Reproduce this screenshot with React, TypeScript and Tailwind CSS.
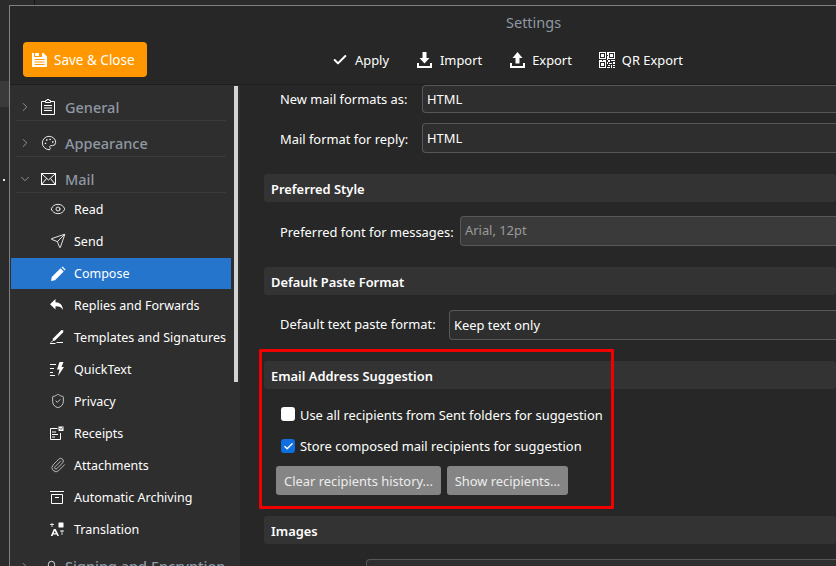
import React from 'react';
import { Check, ChevronDown, ChevronRight, Eye, Lock, Palette, Paperclip, Send, ShieldCheck } from 'lucide-react';

const SaveIcon = () => (
  <svg width="15" height="15" viewBox="0 0 15 15" fill="#fff">
    <path fillRule="evenodd" d="M0 1h2v4h8V1h1.500L15 4.500V15H0zM3 1h4v3H3zM2.500 7v1h10V7zm0 2.500v1h10v-1zm0 2.500v1h10v-1z" />
  </svg>
);

const ClipboardIcon = () => (
  <svg width="14" height="16" viewBox="0 0 14 16" fill="none" stroke="#fff">
    <path d="M4 2.500H.5v13h13v-13H10" />
    <path d="M4.500 3.500v-2h1.500V.5h2v1h1.500v2z" />
    <path d="M3 6.500h8M3 9h8M3 11.500h8" />
  </svg>
);

const EnvelopeIcon = () => (
  <svg width="15" height="12" viewBox="0 0 15 12" fill="none" stroke="#fff">
    <rect x=".5" y=".5" width="14" height="11" />
    <path d="M1 1l6.500 6L14 1M1 11l4.500-5.500M14 11L9.500 5.500" />
  </svg>
);

const PencilIcon = () => (
  <svg width="16" height="16" viewBox="0 0 16 16" fill="#fff">
    <path d="M1 15l.8-4L10.500 2.300l3.200 3.200L5 14.200zM11.500 1.300l1-.8 3 3-.8 1z" />
  </svg>
);

const ReplyIcon = () => (
  <svg width="14" height="14" viewBox="0 0 14 14" fill="#fff">
    <path d="M5.500 1v3.200C10 4.300 12.500 6.800 13 12c-1.500-2.800-4-3.800-7.500-3.700V11.500L0 6.200z" />
  </svg>
);

const SignIcon = () => (
  <svg width="14" height="16" viewBox="0 0 14 16" fill="none" stroke="#fff">
    <path d="M3 9.500L11.500 1 13.500 1.500 13 3.500 5 11.500 2.500 12z" fill="#fff" stroke="none" />
    <path d="M0 14.500h5.500M6.500 13.500h6.500" strokeWidth="1" />
    <path d="M1 13.500l1.500-1.500" strokeWidth="1" />
  </svg>
);

const QuickTextIcon = () => (
  <svg width="14" height="14" viewBox="0 0 14 14" fill="none">
    <path d="M0 2.500h6M0 6.500h4M0 10.500h3M0 13.500h5" stroke="#fff" />
    <path d="M9.500 0h4l-2 5H14l-6 9 1.500-6.500H7z" fill="#fff" />
  </svg>
);

const ReceiptIcon = () => (
  <svg width="14" height="14" viewBox="0 0 14 14" fill="none" stroke="#fff">
    <path d="M7.500 2.500H.5v11h10V7" />
    <path d="M2 6h4M2 8.500h6M2 11h3" />
    <rect x="8.500" y=".5" width="5" height="4.500" fill="#fff" stroke="none" />
    <path d="M9.500 2l1.300 1.500L13 1.500" stroke="#2e2e2e" strokeWidth="0.800" />
  </svg>
);

const ArchiveIcon = () => (
  <svg width="14" height="14" viewBox="0 0 14 14" fill="none" stroke="#fff">
    <path d="M0 1.500h14M1.500 4.500h11v9h-11zM5 7.500h4" />
  </svg>
);

const TranslateIcon = () => (
  <svg width="14" height="14" viewBox="0 0 14 14" fill="#fff">
    <path d="M3.800 7h1.900L9 14H7.400l-.6-1.600H3.200L2.600 14H.8zM4.700 8.800l-1 2.400h2.100z" />
    <rect x="8.500" y="0.500" width="5" height="5" rx="0.500" />
    <path d="M0 2.500h4M2 1v4M10 9h4M12 8v5" stroke="#fff" strokeWidth="0.800" />
  </svg>
);

const TrayArrow = ({ up }: { up?: boolean }) => (
  <svg width="15" height="16" viewBox="0 0 15 16" fill="#fff">
    {up ? <path d="M7.500 0L12.500 6H9.500V11.500H5.500V6H2.500z" /> : <path d="M5.500 0H9.500V6H12.500L7.500 11.500 2.500 6H5.500z" />}
    <path d="M0 11h2v3h11v-3h2v5H0z" />
  </svg>
);

const QrIcon = () => (
  <svg width="16" height="16" viewBox="0 0 16 16" fill="#fff">
    <path fillRule="evenodd" d="M0 0h7v7H0zm1 1v5h5V1zM9 0h7v7H9zm1 1v5h5V1zM0 9h7v7H0zm1 1v5h5v-5z" />
    <path d="M2 2h3v3H2zM11 2h3v3h-3zM2 11h3v3H2zM8 0h1v3H8zM8 4h1v4H8zM0 8h3v1H0zM4 8h3v1H4zM9 8h2v2H9zM12 8h4v1h-4zM8 10h1v2H8zM10 11h3v1h-3zM14 10h2v2h-2zM9 13h2v1H9zM12 13h1v3h-1zM14 13h2v1h-2zM8 15h3v1H8zM14 15h2v1h-2z" />
  </svg>
);

const stroke = { size: 15, color: '#ffffff', strokeWidth: 1.300 };

const subItems = [
  { label: 'Read', icon: <Eye {...stroke} size={16} /> },
  { label: 'Send', icon: <Send {...stroke} size={16} /> },
  { label: 'Compose', icon: <PencilIcon />, active: true },
  { label: 'Replies and Forwards', icon: <ReplyIcon /> },
  { label: 'Templates and Signatures', icon: <SignIcon /> },
  { label: 'QuickText', icon: <QuickTextIcon /> },
  { label: 'Privacy', icon: <ShieldCheck {...stroke} size={16} color="#dddddd" /> },
  { label: 'Receipts', icon: <ReceiptIcon /> },
  { label: 'Attachments', icon: <Paperclip {...stroke} size={16} color="#cccccc" /> },
  { label: 'Automatic Archiving', icon: <ArchiveIcon /> },
  { label: 'Translation', icon: <TranslateIcon /> },
];

const GroupRow = ({ label, icon, open }: { label: string; icon: React.ReactNode; open?: boolean }) => (
  <div className="h-9 shrink-0 pl-[5px]">
    <div className="flex h-9 w-[210px] items-center border-b border-[#3a3a3a] pl-[2px] pt-[9px]">
      <span className="flex w-[23px] items-center text-[#a0a0a0]">
        {open ? <ChevronDown size={14} strokeWidth={1.500} /> : <ChevronRight size={14} strokeWidth={1.500} />}
      </span>
      <span className="flex w-[24px] items-center">{icon}</span>
      <span className="pt-[1px] text-[14.500px] font-medium text-[#8f98a3]">{label}</span>
    </div>
  </div>
);

const Sidebar = () => (
  <div className="flex h-full w-[230px] shrink-0 bg-[#2e2e2e] pl-[1px]">
    <div className="flex w-[220px] shrink-0 flex-col">
      <GroupRow label="General" icon={<ClipboardIcon />} />
      <GroupRow label="Appearance" icon={<Palette {...stroke} size={16} />} />
      <GroupRow label="Mail" icon={<EnvelopeIcon />} open />
      {subItems.map((item) => (
        <div
          key={item.label}
          className={`flex shrink-0 items-center pl-[39px] text-[12.500px] text-white ${item.active ? 'mt-[1px] h-[31px] bg-[#2675cd]' : 'h-8'}`}
        >
          <span className="flex w-[24px] items-center">{item.icon}</span>
          <span className="whitespace-nowrap pt-[2px]">{item.label}</span>
        </div>
      ))}
      <div className="flex h-11 shrink-0 items-center pl-[7px] text-[14.500px] font-medium text-[#8f98a3]">
        <span className="flex w-[26px] items-center text-[#a0a0a0]">
          <ChevronRight size={14} strokeWidth={1.500} />
        </span>
        <Lock size={15} color="#fff" strokeWidth={1.300} />
        <span className="ml-[6px] whitespace-nowrap">Signing and Encryption</span>
      </div>
    </div>
    <div className="ml-[3px] mt-[1px] h-[296px] w-1 shrink-0 bg-[#d4d4d4]" />
  </div>
);

const SectionHeader = ({ children }: { children: React.ReactNode }) => (
  <div className="mt-[21px] flex h-7 items-center rounded-[3px] bg-[#333333] pl-[7px] pt-[3px] font-semibold text-white">{children}</div>
);

const SelectField = ({ children }: { children: React.ReactNode }) => (
  <div className="flex h-full flex-1 items-center rounded-l-[4px] border border-r-0 border-[#575757] bg-[#2e2e2e] pl-[4px] pt-[2px] text-white">
    {children}
  </div>
);

const ToolButton = ({ icon, label, gap, right }: { icon: React.ReactNode; label: string; gap: string; right?: string }) => (
  <div className={`flex items-center text-[12.900px] text-white ${gap} ${right ?? ''}`}>
    <span className="flex items-center">{icon}</span>
    <span>{label}</span>
  </div>
);

const Content = () => (
  <div className="min-w-0 flex-1 pl-[24px] text-[12.900px] text-white">
    <div className="flex h-7 items-center gap-[5px] pl-4">
      <span className="w-[137px] whitespace-nowrap pt-[2px]">New mail formats as:</span>
      <SelectField>HTML</SelectField>
    </div>
    <div className="mt-[10px] flex h-[30px] items-center gap-[5px] pl-4">
      <span className="w-[137px] whitespace-nowrap pt-[3px]">Mail format for reply:</span>
      <SelectField>HTML</SelectField>
    </div>

    <SectionHeader>Preferred Style</SectionHeader>
    <div className="mt-[14px] flex h-[30px] items-center gap-[7px] pl-4">
      <span className="w-[173px] whitespace-nowrap pt-[3px]">Preferred font for messages:</span>
      <div className="flex h-full flex-1 items-center rounded-l-[4px] border border-r-0 border-[#575757] bg-[#3a3a3a] pl-[4px] text-[#9a9a9a]">
        Arial, 12pt
      </div>
    </div>

    <SectionHeader>Default Paste Format</SectionHeader>
    <div className="mt-[15px] flex h-[30px] items-center gap-[12px] pl-4">
      <span className="w-[157px] whitespace-nowrap">Default text paste format:</span>
      <SelectField>Keep text only</SelectField>
    </div>

    <SectionHeader>Email Address Suggestion</SectionHeader>
    <div className="mt-[17px] flex h-[18px] items-center gap-[5px] pl-[17px]">
      <span className="h-[14px] w-[14px] -translate-y-px rounded-[3px] bg-white" />
      <span className="whitespace-nowrap pt-[2px]">Use all recipients from Sent folders for suggestion</span>
    </div>
    <div className="mt-[13px] flex h-[18px] items-center gap-[5px] pl-[17px]">
      <span className="flex h-[14px] w-[14px] items-center justify-center rounded-[3px] bg-[#0f6fe0]">
        <Check size={11} color="#fff" strokeWidth={3} />
      </span>
      <span className="whitespace-nowrap pt-[2px]">Store composed mail recipients for suggestion</span>
    </div>
    <div className="mt-[11px] flex h-[29px] gap-[6px] pl-3">
      <div className="flex w-[165px] items-center justify-center rounded-[3px] bg-[#858585] pt-[2px] text-[#ececec]">Clear recipients history...</div>
      <div className="flex w-[121px] items-center justify-center rounded-[3px] bg-[#858585] pt-[2px] text-[#ececec]">Show recipients...</div>
    </div>

    <SectionHeader>Images</SectionHeader>
    <div className="ml-[102px] mt-[15px] h-10 rounded-tl-[4px] border-l border-t border-[#575757] bg-[#2e2e2e]" />
  </div>
);

export default function App() {
  return (
    <div className="relative h-[566px] w-[836px] overflow-hidden bg-[#2b2b2b] pl-[9px] pt-[5px] font-['Noto_Sans',sans-serif]">
      {/* bits of the app behind the dialog */}
      <div className="absolute left-0 top-[81px] h-[26px] w-[9px] bg-[#3a3a3a]" />
      <div className="absolute left-[3px] top-[179px] h-[2px] w-[2px] bg-[#e8e8e8]" />
      <div className="absolute left-[34px] top-0 h-[5px] w-px bg-[#151515]" />

      <div className="flex h-[561px] flex-col border-l border-t border-[#808080] bg-[#262726]">
        <div className="relative flex h-[79px] shrink-0 items-end border-b border-[#1e1e1e] pb-[7px] pl-[13px]">
          <div className="flex h-[35px] w-[124px] items-center gap-[7px] rounded-[4px] bg-[#ff9800] pl-[9px] text-[13.500px] text-white">
            <SaveIcon />
            <span className="pt-[1px]">Save &amp; Close</span>
          </div>
          <div className="ml-[185px] flex h-[35px] items-center pt-[2px]">
            <ToolButton icon={<Check size={16} color="#fff" strokeWidth={3} />} label="Apply" gap="gap-[7px]" right="mr-[28px]" />
            <ToolButton icon={<TrayArrow />} label="Import" gap="gap-[8px]" right="mr-[28px]" />
            <ToolButton icon={<TrayArrow up />} label="Export" gap="gap-[7px]" right="mr-[27px]" />
            <ToolButton icon={<QrIcon />} label="QR Export" gap="gap-[7px]" />
          </div>
          <span className="absolute left-[496px] top-[6px] text-[14.500px] text-[#8f98a3]">Settings</span>
        </div>
        <div className="flex min-h-0 flex-1 overflow-hidden">
          <Sidebar />
          <Content />
        </div>
      </div>

      {/* red annotation drawn over the screenshot */}
      <div className="absolute left-[259px] top-[349px] h-[160px] w-[355px] rounded-[1px] border-[3px] border-[#f00000]" />
    </div>
  );
}
